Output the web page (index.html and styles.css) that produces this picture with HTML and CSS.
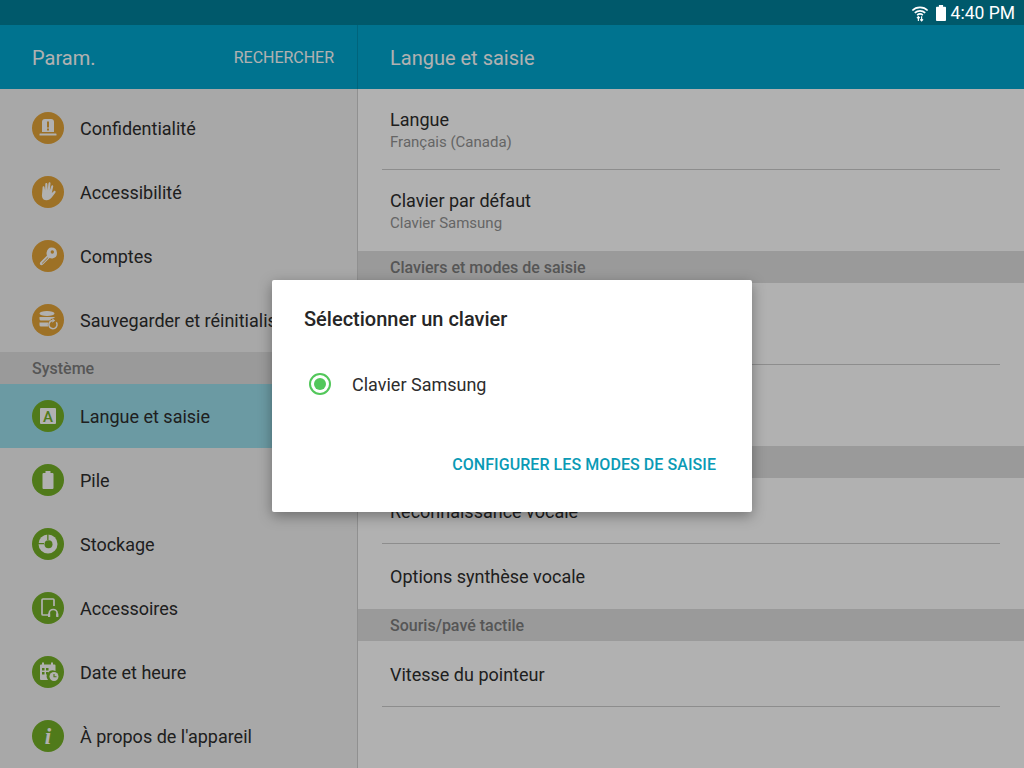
FILE: index.html
```html
<!DOCTYPE html>
<html lang="fr">
<head>
<meta charset="utf-8">
<title>Param.</title>
<link rel="stylesheet" href="styles.css">
</head>
<body>
<div class="screen">
  <div class="status">
    <svg class="wifi" width="18" height="18" viewBox="0 0 20 20" fill="none" stroke="#fff" stroke-width="1.8">
      <path d="M1.5 7.200C6 2.600 14 2.600 18.500 7.200"/>
      <path d="M4.200 9.900C7.500 6.800 12.500 6.800 15.800 9.900"/>
      <path d="M6.800 12.300C8.700 10.700 11.300 10.700 13.200 12.300"/>
      <path d="M8.200 19V14.200M6.600 15.800L8.200 14L9.800 15.800M11.800 13.600V18.600M10.200 17L11.800 18.800L13.400 17" stroke-width="1.300"/>
    </svg>
    <svg class="battery" width="10" height="16" viewBox="0 0 12 18" preserveAspectRatio="none" fill="#fff">
      <path d="M3.500 0H8.500V2H11a1 1 0 0 1 1 1V17a1 1 0 0 1-1 1H1a1 1 0 0 1-1-1V3a1 1 0 0 1 1-1H3.500z"/>
    </svg>
    <span class="clock">4:40 PM</span>
  </div>
  <div class="app">
    <aside class="side">
      <header class="bar side-bar">
        <span class="bar-title">Param.</span>
        <span class="search">RECHERCHER</span>
      </header>
      <nav class="side-list">
        <div class="side-row">
          <svg class="ico" viewBox="0 0 32 32"><circle class="o" cx="16" cy="16" r="16"/><path class="w" d="M10 20V10a3 3 0 0 1 3-3h6a3 3 0 0 1 3 3v10z"/><rect class="w" x="7.500" y="21.500" width="17" height="2" rx=".6"/><path class="do" d="M15 9.500h2v6h-2zM15 16.600h2v2h-2z"/></svg>
          <span class="side-label">Confidentialité</span>
        </div>
        <div class="side-row">
          <svg class="ico" viewBox="0 0 32 32"><circle class="o" cx="16" cy="16" r="16"/><path class="w" d="M10.600 11.200c0-1.400 1.800-1.400 1.900 0l.6 3.400.2-6.600c0-1.500 2-1.500 2.100 0l.2 6.200.9-6.900c.2-1.500 2.200-1.200 2 .3l-.7 7 1.500-4.600c.5-1.400 2.300-.8 1.900.6l-1.400 6.400 2-1.800c1.100-1 2.500.3 1.500 1.500l-3.400 4.600c-1.500 2-3.300 3-5.400 3-2.700 0-4.400-1.700-4.600-4.600z"/></svg>
          <span class="side-label">Accessibilité</span>
        </div>
        <div class="side-row">
          <svg class="ico" viewBox="0 0 32 32"><circle class="o" cx="16" cy="16" r="16"/><path class="w" d="M19.500 7.500a5.500 5.500 0 0 1 1 10.900c-1 .2-2 0-2.900-.4L11 24.500c-.8.8-2 .9-2.700.2s-.6-1.900.2-2.700l6.500-6.500c-.4-.9-.6-1.900-.4-2.900.5-3 2.200-5.100 4.900-5.100z"/><circle class="do" cx="20.300" cy="12" r="1.700"/><path class="do" d="M9.800 23.200l6-6 .5.500-6 6z"/></svg>
          <span class="side-label">Comptes</span>
        </div>
        <div class="side-row">
          <svg class="ico" viewBox="0 0 32 32"><circle class="o" cx="16" cy="16" r="16"/><ellipse class="w" cx="15" cy="9.500" rx="7.500" ry="2.500"/><path class="w" d="M7.500 13h15v1a6 6 0 0 0-5 2.500H9a1.500 1.500 0 0 1-1.500-1.500zM7.500 18.500h8.700a6 6 0 0 0-.1 4H9a1.500 1.500 0 0 1-1.500-1.500z"/><path d="M24.300 18.200a4.100 4.100 0 1 1-3.600-1.700" fill="none" stroke="#fff" stroke-width="1.500"/><path class="w" d="M20.300 14.200v4.600l2.900-2.300z"/></svg>
          <span class="side-label">Sauvegarder et réinitialiser</span>
        </div>
        <div class="section section-side">Système</div>
        <div class="side-row side-row-on">
          <svg class="ico" viewBox="0 0 32 32"><circle class="g" cx="16" cy="16" r="16"/><rect class="w" x="8" y="8" width="16" height="16" rx="1"/><text class="ico-a" x="16" y="21.500" text-anchor="middle">A</text></svg>
          <span class="side-label">Langue et saisie</span>
        </div>
        <div class="side-row">
          <svg class="ico" viewBox="0 0 32 32"><circle class="g" cx="16" cy="16" r="16"/><path class="w" d="M13.500 7h5v2h2a1 1 0 0 1 1 1v14a1 1 0 0 1-1 1h-9a1 1 0 0 1-1-1V10a1 1 0 0 1 1-1h2z"/></svg>
          <span class="side-label">Pile</span>
        </div>
        <div class="side-row">
          <svg class="ico" viewBox="0 0 32 32"><circle class="g" cx="16" cy="16" r="16"/><circle class="w" cx="16" cy="16" r="9.500"/><path class="dg" d="M15.200 6h1.300v6h-1.300zM6 15h6v1.300H6z"/><circle class="dg" cx="16.500" cy="16.300" r="4"/></svg>
          <span class="side-label">Stockage</span>
        </div>
        <div class="side-row">
          <svg class="ico" viewBox="0 0 32 32"><circle class="g" cx="16" cy="16" r="16"/><path d="M18 23H11a1 1 0 0 1-1-1V8a1 1 0 0 1 1-1h10a1 1 0 0 1 1 1v6" fill="none" stroke="#fff" stroke-width="1.700"/><path d="M17.200 24v-2.500a4 4 0 0 1 8 0V24" fill="none" stroke="#fff" stroke-width="1.700"/><rect class="w" x="16" y="21.500" width="2.200" height="3.500"/><rect class="w" x="24.200" y="21.500" width="2.200" height="3.500"/></svg>
          <span class="side-label">Accessoires</span>
        </div>
        <div class="side-row">
          <svg class="ico" viewBox="0 0 32 32"><circle class="g" cx="16" cy="16" r="16"/><path class="w" d="M10 6.500h2V8.500h7V6.500h2v2h1.500a1 1 0 0 1 1 1V15a6 6 0 0 0-7.500 9H9a1 1 0 0 1-1-1V9.500a1 1 0 0 1 1-1h1z"/><path class="dg" d="M10 12h2.500v2.500H10zM14 12h2.500v2.500H14zM10 16h2.500v2.500H10zM14 16h2v2.500h-2z"/><circle class="w" cx="22" cy="20.500" r="4.500"/><path class="clock-hand" d="M22 18v2.700h2.500"/></svg>
          <span class="side-label">Date et heure</span>
        </div>
        <div class="side-row">
          <svg class="ico" viewBox="0 0 32 32"><circle class="g" cx="16" cy="16" r="16"/><text class="ico-i" x="16" y="24" text-anchor="middle">i</text></svg>
          <span class="side-label">À propos de l'appareil</span>
        </div>
      </nav>
    </aside>
    <main class="main">
      <header class="bar main-bar"><span class="bar-title">Langue et saisie</span></header>
      <div class="main-list">
        <div class="item item-first item-line">
          <div class="item-title">Langue</div>
          <div class="item-sub">Français (Canada)</div>
        </div>
        <div class="item item-two">
          <div class="item-title">Clavier par défaut</div>
          <div class="item-sub">Clavier Samsung</div>
        </div>
        <div class="section section-main">Claviers et modes de saisie</div>
        <div class="item item-tall item-line"></div>
        <div class="item item-two"></div>
        <div class="section section-main"></div>
        <div class="item item-one item-line"><div class="item-title">Reconnaissance vocale</div></div>
        <div class="item item-plain"><div class="item-title">Options synthèse vocale</div></div>
        <div class="section section-main">Souris/pavé tactile</div>
        <div class="item item-one item-line"><div class="item-title">Vitesse du pointeur</div></div>
      </div>
    </main>
    <div class="scrim"></div>
    <section class="dialog">
      <h2 class="dialog-title">Sélectionner un clavier</h2>
      <div class="choice">
        <span class="radio"><span class="radio-dot"></span></span>
        <span class="choice-label">Clavier Samsung</span>
      </div>
      <div class="dialog-actions"><span class="action">CONFIGURER LES MODES DE SAISIE</span></div>
    </section>
  </div>
</div>
</body>
</html>
```

FILE: styles.css
```css
* { box-sizing: border-box; }
html, body { margin: 0; padding: 0; }
body { font-family: Roboto, "Liberation Sans", sans-serif; }
.screen { width: 1024px; height: 768px; overflow: hidden; display: flex; flex-direction: column; background: #fff; }

.status { height: 25px; flex: none; background: #00596b; color: #fff; display: flex; align-items: center; justify-content: flex-end; padding-right: 9px; }
.wifi { margin-right: 7px; }
.battery { margin-right: 5px; }
.clock { font-size: 17.5px; line-height: 25px; padding-top: 1px; }

.app { position: relative; flex: 1; display: flex; min-height: 0; }
.side { width: 358px; flex: none; background: #f2f2f2; border-right: 1px solid #d0d0d0; display: flex; flex-direction: column; }
.main { flex: 1; background: #fff; display: flex; flex-direction: column; }

.bar { height: 64px; flex: none; background: #00a6ce; display: flex; align-items: center; color: #fff; padding-top: 1px; }
.side-bar { justify-content: space-between; padding-left: 32px; padding-right: 23px; margin-right: -1px; border-right: 1px solid #0090b3; }
.main-bar { padding-left: 32px; }
.bar-title { font-size: 20px; }
.search { font-size: 16px; letter-spacing: -.03px; }

.side-list { padding-top: 7px; display: flex; flex-direction: column; }
.side-row { height: 64px; display: flex; align-items: center; padding-left: 32px; }
.side-row-on { background: #9adeeb; }
.ico { width: 32px; height: 32px; flex: none; margin-right: 16px; }
.side-label { font-size: 18px; color: #2d2d2d; white-space: nowrap; }
.o { fill: #e3a337; }
.g { fill: #74b026; }
.w { fill: #fff; }
.do { fill: #e3a337; }
.dg { fill: #74b026; }
.clock-hand { fill: none; stroke: #74b026; stroke-width: 1.100; }
.ico-a { font: 500 15px Roboto, sans-serif; fill: #74b026; }
.ico-i { font: italic 700 23px "Liberation Serif", serif; fill: #fff; }

.section { height: 32px; background: #dedede; color: #7c7c7c; font-size: 16px; font-weight: 500; display: flex; align-items: center; }
.section-side { padding-left: 32px; }
.section-main { padding-left: 32px; }

.main-list { padding-top: 1px; display: flex; flex-direction: column; }
.item { margin: 0 24px; padding: 0 8px; display: flex; flex-direction: column; justify-content: center; }
.item-first { height: 80px; }
.item-two { height: 81px; }
.item-tall { height: 82px; }
.item-one { height: 66px; padding-top: 2px; }
.item-plain { height: 65px; }
.item-line { border-bottom: 1px solid #cccccc; }
.item-title { font-size: 18px; line-height: 24px; color: #2d2d2d; }
.item-sub { font-size: 15px; line-height: 20px; color: #929292; }

.scrim { position: absolute; inset: 0; background: rgba(0, 0, 0, .306); }

.dialog { position: absolute; left: 272px; top: 255px; width: 480px; height: 232px; background: #fff; border-radius: 2px; box-shadow: 0 4px 14px rgba(0, 0, 0, .35); padding: 27px 36px 0 32px; display: flex; flex-direction: column; }
.dialog-title { margin: 0; font-size: 20px; line-height: 24px; font-weight: 500; color: #262626; }
.choice { display: flex; align-items: center; margin-top: 37px; height: 32px; padding-left: 5px; }
.radio { width: 22px; height: 22px; border: 2px solid #52c75a; border-radius: 50%; display: flex; align-items: center; justify-content: center; margin-right: 21px; }
.radio-dot { width: 12px; height: 12px; border-radius: 50%; background: #52c75a; }
.choice-label { font-size: 18px; color: #2d2d2d; }
.dialog-actions { margin-top: 55px; display: flex; justify-content: flex-end; }
.action { font-size: 16px; font-weight: 500; color: #0a9ab5; line-height: 20px; letter-spacing: .07px; }
```
